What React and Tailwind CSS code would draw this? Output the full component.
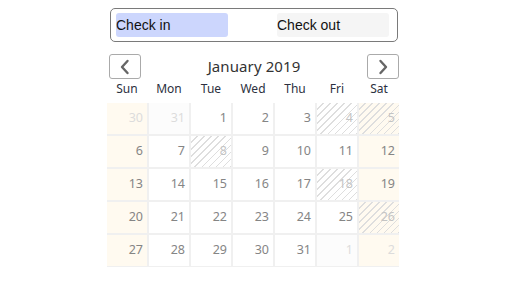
import React from 'react';

const hatch =
  'bg-[repeating-linear-gradient(135deg,transparent_0px,transparent_4px,#dedede_4px,#dedede_5px)]';

const days = ['Sun', 'Mon', 'Tue', 'Wed', 'Thu', 'Fri', 'Sat'];

// [day, outOfMonth, blocked]
const weeks = [
  [[30, true], [31, true], [1], [2], [3], [4, false, true], [5, false, true]],
  [[6], [7], [8, false, true], [9], [10], [11], [12]],
  [[13], [14], [15], [16], [17], [18, false, true], [19]],
  [[20], [21], [22], [23], [24], [25], [26, false, true]],
  [[27], [28], [29], [30], [31], [1, true], [2, true]],
];

const Chevron = ({ dir }) => (
  <svg width="16" height="16" viewBox="0 0 16 16" fill="none">
    <path
      d={dir === 'left' ? 'M10.5 2 L5 8 L10.5 14' : 'M5.5 2 L11 8 L5.5 14'}
      stroke="#666"
      strokeWidth="2.4"
      strokeLinecap="round"
      strokeLinejoin="round"
    />
  </svg>
);

const Cell = ({ day, out, blocked, weekend }) => {
  let bg = weekend ? 'bg-[#fffaf0]' : out ? 'bg-[#fcfcfc]' : 'bg-white';
  let color = out ? 'text-[#dcdcdc]' : blocked ? 'text-[#c4c4c4]' : 'text-[#858585]';
  return (
    <div className={`h-[31px] text-[12.5px] ${bg} ${color}`}>
      <div className={`w-full h-full flex items-center justify-end pr-[4px] ${blocked ? hatch : ''}`}>{day}</div>
    </div>
  );
};

export default function App() {
  return (
    <div className="w-[513px] h-[282px] bg-white pt-[8px] font-['Noto_Sans',sans-serif]">
      <div className="ml-[110px] w-[288px] h-[34px] border border-[#7a7a7a] rounded-[5px] flex items-center justify-between pl-[5px] pr-[8px] font-['Liberation_Sans',Arial,sans-serif] text-[14px] text-[#111]">
        <div className="w-[112px] h-[24px] bg-[#ccd6fd] rounded-[3px] flex items-center pt-[1px]">Check in</div>
        <div className="w-[112px] h-[24px] bg-[#f5f5f5] rounded-[3px] flex items-center pt-[1px]">Check out</div>
      </div>

      <div className="ml-[109px] w-[290px] mt-[12px] flex items-center justify-between">
        <button className="w-[32px] h-[25px] border border-[#aaa] rounded-[3px] flex items-center justify-center">
          <Chevron dir="left" />
        </button>
        <div className="text-[15px] text-[#333] tracking-[0.1px]">January 2019</div>
        <button className="w-[32px] h-[25px] border border-[#aaa] rounded-[3px] flex items-center justify-center">
          <Chevron dir="right" />
        </button>
      </div>

      <div className="ml-[107px] w-[292px]">
        <div className="grid grid-cols-7 gap-x-[2px] h-[18px] mt-[1px] items-center text-[12px] text-[#2c3040]">
          {days.map((d) => (
            <div key={d} className="text-center">{d}</div>
          ))}
        </div>
        <div className="mt-[5px] grid grid-cols-7 gap-[2px] bg-[#f0f0f0] pb-[1px]">
          {weeks.map((w, wi) =>
            w.map(([day, out, blocked], di) => (
              <Cell
                key={`${wi}-${di}`}
                day={day}
                out={out}
                blocked={blocked}
                weekend={di === 0 || di === 6}
              />
            ))
          )}
        </div>
      </div>
    </div>
  );
}
